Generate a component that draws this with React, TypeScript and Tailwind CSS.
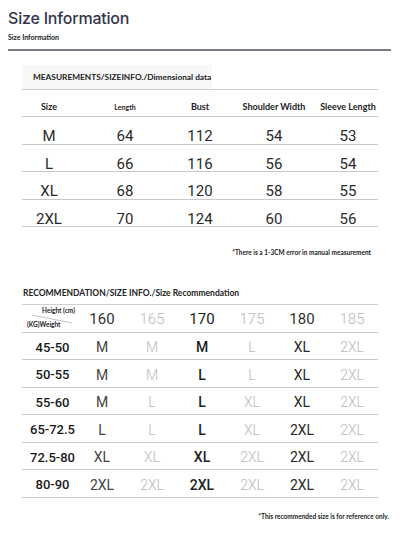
import React from "react";

const measurements = [
  { size: "M", length: "64", bust: "112", shoulder: "54", sleeve: "53" },
  { size: "L", length: "66", bust: "116", shoulder: "56", sleeve: "54" },
  { size: "XL", length: "68", bust: "120", shoulder: "58", sleeve: "55" },
  { size: "2XL", length: "70", bust: "124", shoulder: "60", sleeve: "56" },
];

const heights = ["160", "165", "170", "175", "180", "185"];

const recommendations = [
  { weight: "45-50", sizes: ["M", "M", "M", "L", "XL", "2XL"] },
  { weight: "50-55", sizes: ["M", "M", "L", "L", "XL", "2XL"] },
  { weight: "55-60", sizes: ["M", "L", "L", "XL", "XL", "2XL"] },
  { weight: "65-72.5", sizes: ["L", "L", "L", "XL", "2XL", "2XL"] },
  { weight: "72.5-80", sizes: ["XL", "XL", "XL", "2XL", "2XL", "2XL"] },
  { weight: "80-90", sizes: ["2XL", "2XL", "2XL", "2XL", "2XL", "2XL"] },
];

// column look for the recommendation table: dark / light / bold-dark
const colTone = [
  "text-[#444] font-normal",
  "text-[#b9b9b9] font-light",
  "text-[#1f1f1f] font-medium",
  "text-[#b9b9b9] font-light",
  "text-[#2a2a2a] font-normal",
  "text-[#b9b9b9] font-light",
];

const headTone = [
  "text-[#333] font-normal",
  "text-[#b9b9b9] font-light",
  "text-[#222] font-normal",
  "text-[#b9b9b9] font-light",
  "text-[#333] font-normal",
  "text-[#b9b9b9] font-light",
];

const label = "font-['Lato','Liberation_Sans',sans-serif]";
const num = "font-['Roboto','Liberation_Sans',sans-serif]";

const Cell = ({ children, className = "" }: { children: React.ReactNode; className?: string }) => (
  <div className={`flex items-center justify-center whitespace-nowrap ${className}`}>{children}</div>
);

const App = () => {
  return (
    <div className="w-[400px] h-[535px] bg-white overflow-hidden">
      {/* header */}
      <div className="px-2 pt-[7px]">
        <h1 className="font-['Inter',sans-serif] text-[16px] leading-[22px] font-medium text-[#33344a] tracking-[-0.2px]">
          Size Information
        </h1>
        <p className={`${label} text-[7px] font-bold text-[#222] mt-[3px] leading-[10px]`}>Size Information</p>
        <div className="h-[2px] bg-[#7b7b87] mt-[7px] mr-[1px]" />
      </div>

      {/* measurements */}
      <div className="ml-[22px] w-[356px] mt-[14px]">
        <div className="w-[190px] h-[24px] bg-[#f7f7f7] flex items-center pl-[11px]">
          <span className={`${label} text-[8.3px] font-bold text-[#222]`}>
            MEASUREMENTS/SIZEINFO./Dimensional data
          </span>
        </div>
        <div className="h-[1px] bg-[#cfcfcf]" />
        <div className={`grid grid-cols-[54px_98px_52px_96px_52px] h-[27px] pt-[8px] border-b border-[#c9c9c9] ${label} font-bold text-[#222]`}>
          <Cell className="text-[9px]">Size</Cell>
          <Cell className="text-[7px]">Length</Cell>
          <Cell className="text-[9px]">Bust</Cell>
          <Cell className="text-[9px]">Shoulder Width</Cell>
          <Cell className="text-[9px]">Sleeve Length</Cell>
        </div>
        {measurements.map((m) => (
          <div
            key={m.size}
            className={`grid grid-cols-[54px_98px_52px_96px_52px] h-[27.5px] pt-[8px] border-b border-[#c9c9c9] ${num} text-[15px] text-[#2a2a2a]`}
          >
            <Cell>{m.size}</Cell>
            <Cell>{m.length}</Cell>
            <Cell>{m.bust}</Cell>
            <Cell>{m.shoulder}</Cell>
            <Cell>{m.sleeve}</Cell>
          </div>
        ))}
        <p className={`${label} text-[6.5px] font-bold text-[#222] text-right pr-[7px] mt-[21px]`}>
          *There is a 1-3CM error in manual measurement
        </p>
      </div>

      {/* recommendation */}
      <div className="ml-[22px] w-[356px] mt-[29px]">
        <p className={`${label} text-[8.5px] font-bold text-[#222] pl-[1px] leading-[12px]`}>
          RECOMMENDATION/SIZE INFO./Size Recommendation
        </p>
        <div className="h-[1px] bg-[#cfcfcf] mt-[5px]" />
        <div className="grid grid-cols-[55px_repeat(6,50px)] h-[28px] border-b border-[#c9c9c9]">
          <div className="relative">
            <span className={`absolute left-[20px] top-[1px] ${label} text-[6.5px] font-bold text-[#222]`}>Height (cm)</span>
            <svg className="absolute left-[10px] top-[9px]" width="40" height="10" viewBox="0 0 40 10">
              <line x1="0" y1="1" x2="40" y2="9" stroke="#9a9a9a" strokeWidth="0.6" />
            </svg>
            <span className={`absolute left-[5px] top-[15px] ${label} text-[6.5px] font-bold text-[#222]`}>(KG)Weight</span>
          </div>
          {heights.map((h, i) => (
            <Cell key={h} className={`${num} text-[15px] pt-[2px] ${headTone[i]}`}>
              {h}
            </Cell>
          ))}
        </div>
        {recommendations.map((r) => (
          <div
            key={r.weight}
            className="grid grid-cols-[55px_repeat(6,50px)] h-[27.5px] pt-[3px] border-b border-[#c9c9c9]"
          >
            <Cell className={`${num} text-[13px] font-medium text-[#1a1a1a] pl-[6px]`}>{r.weight}</Cell>
            {r.sizes.map((s, i) => (
              <Cell key={i} className={`${num} text-[14px] ${colTone[i]}`}>
                {s}
              </Cell>
            ))}
          </div>
        ))}
        <p className={`${label} text-[6.5px] font-bold text-[#222] text-right mr-[-11px] mt-[14px]`}>
          *This recommended size is for reference only.
        </p>
      </div>
    </div>
  );
};

export default App;
